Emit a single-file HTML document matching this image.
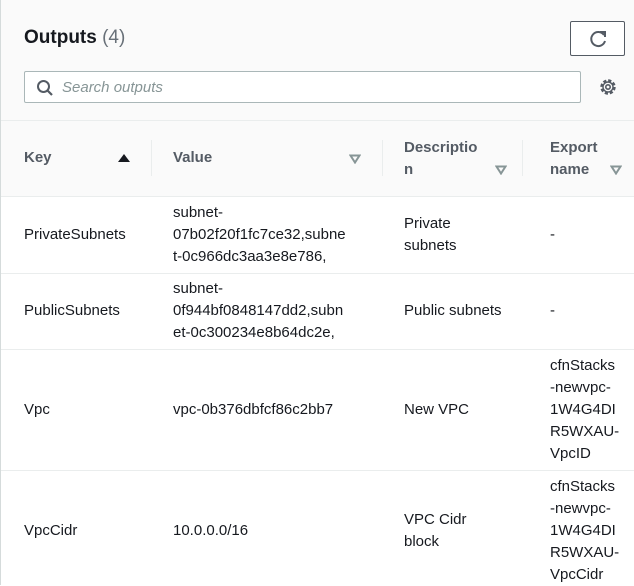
<!DOCTYPE html>
<html><head><style>
*{margin:0;padding:0;box-sizing:border-box}
body{width:634px;height:585px;overflow:hidden;background:#fff;font-family:"Liberation Sans",sans-serif;color:#16191f;position:relative;border-left:1px solid #d5dbdb}
.top{position:absolute;left:0;top:0;width:634px;height:197px;background:#fafafa}
.abs{position:absolute}
h1{position:absolute;left:23px;top:27px;font-size:19px;font-weight:bold}
h1 span{font-weight:normal;color:#687078}
.btn{position:absolute;left:569px;top:21px;width:55px;height:35px;border:1px solid #545b64;background:#fff;border-radius:2px}
.search{position:absolute;left:23px;top:71px;width:557px;height:32px;border:1px solid #aab7b8;background:#fff;border-radius:2px}
.search i{position:absolute;left:37px;top:7px;font-size:15px;color:#879596}
.hr{position:absolute;left:0;width:634px;height:1px;background:#eaeded}
.th{position:absolute;font-weight:bold;font-size:15px;color:#545b64;line-height:22px}
.vd{position:absolute;top:140px;width:1px;height:36px;background:#eaeded}
.td{position:absolute;font-size:15px;line-height:22px;color:#16191f}
.tri{position:absolute}
</style></head><body>
<div class="top"></div>
<h1>Outputs <span>(4)</span></h1>
<div class="btn"><svg width="55" height="35" viewBox="0 0 55 35"><path d="M33 13 A7 7 0 1 0 34 19" fill="none" stroke="#545b64" stroke-width="2"/><path d="M29 10 L34 10 L34 15" fill="none" stroke="#545b64" stroke-width="2"/></svg></div>
<div class="search"><svg class="abs" style="left:11px;top:7px" width="18" height="18"><circle cx="7.5" cy="7.5" r="5.5" fill="none" stroke="#545b64" stroke-width="2"/><path d="M11.5 11.5 L16 16" stroke="#545b64" stroke-width="2.2"/></svg><i>Search outputs</i></div>
<svg class="abs" style="left:597px;top:77px" width="20" height="20" viewBox="0 0 20 20"><circle cx="10" cy="10" r="6.5" fill="none" stroke="#545b64" stroke-width="2.4" stroke-dasharray="3.2 1.9"/><circle cx="10" cy="10" r="5" fill="none" stroke="#545b64" stroke-width="1.4"/><circle cx="10" cy="10" r="2.2" fill="none" stroke="#545b64" stroke-width="1.6"/></svg>
<div class="hr" style="top:120px"></div>
<div class="th" style="left:23px;top:147px">Key</div>
<svg class="tri" style="left:117px;top:153px" width="12" height="10"><path d="M0 9 L6 1 L12 9 Z" fill="#16191f"/></svg>
<div class="vd" style="left:150px"></div>
<div class="th" style="left:172px;top:147px">Value</div>
<svg class="tri" style="left:348px;top:154px" width="12" height="10"><path d="M1.5 1.5 L10.5 1.5 L6 8.5 Z" fill="none" stroke="#879596" stroke-width="2"/></svg>
<div class="vd" style="left:381px"></div>
<div class="th" style="left:403px;top:137px">Descriptio<br>n</div>
<svg class="tri" style="left:494px;top:165px" width="12" height="10"><path d="M1.5 1.5 L10.5 1.5 L6 8.5 Z" fill="none" stroke="#879596" stroke-width="2"/></svg>
<div class="vd" style="left:521px"></div>
<div class="th" style="left:549px;top:137px">Export<br>name</div>
<svg class="tri" style="left:609px;top:165px" width="12" height="10"><path d="M1.5 1.5 L10.5 1.5 L6 8.5 Z" fill="none" stroke="#879596" stroke-width="2"/></svg>
<div class="hr" style="top:196px"></div>
<div class="td" style="left:23px;top:224px">PrivateSubnets</div>
<div class="td" style="left:172px;top:202px">subnet-<br>07b02f20f1fc7ce32,subne<br>t-0c966dc3aa3e8e786,</div>
<div class="td" style="left:403px;top:213px">Private<br>subnets</div>
<div class="td" style="left:549px;top:224px">-</div>
<div class="hr" style="top:273px"></div>
<div class="td" style="left:23px;top:300px">PublicSubnets</div>
<div class="td" style="left:172px;top:278px">subnet-<br>0f944bf0848147dd2,subn<br>et-0c300234e8b64dc2e,</div>
<div class="td" style="left:403px;top:300px">Public subnets</div>
<div class="td" style="left:549px;top:300px">-</div>
<div class="hr" style="top:349px"></div>
<div class="td" style="left:23px;top:399px">Vpc</div>
<div class="td" style="left:172px;top:399px">vpc-0b376dbfcf86c2bb7</div>
<div class="td" style="left:403px;top:399px">New VPC</div>
<div class="td" style="left:549px;top:355px">cfnStacks<br>-newvpc-<br>1W4G4DI<br>R5WXAU-<br>VpcID</div>
<div class="hr" style="top:470px"></div>
<div class="td" style="left:23px;top:520px">VpcCidr</div>
<div class="td" style="left:172px;top:520px">10.0.0.0/16</div>
<div class="td" style="left:403px;top:509px">VPC Cidr<br>block</div>
<div class="td" style="left:549px;top:476px">cfnStacks<br>-newvpc-<br>1W4G4DI<br>R5WXAU-<br>VpcCidr</div>
</body></html>
